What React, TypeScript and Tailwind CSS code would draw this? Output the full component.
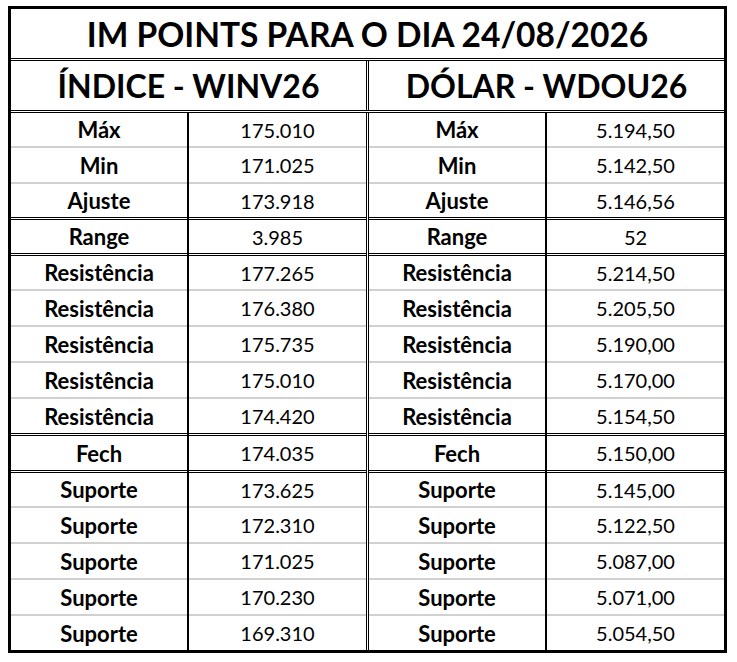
const left = {
  title: "ÍNDICE - WINV26",
  rows: [
    ["Máx", "175.010"],
    ["Min", "171.025"],
    ["Ajuste", "173.918"],
    ["Range", "3.985"],
    ["Resistência", "177.265"],
    ["Resistência", "176.380"],
    ["Resistência", "175.735"],
    ["Resistência", "175.010"],
    ["Resistência", "174.420"],
    ["Fech", "174.035"],
    ["Suporte", "173.625"],
    ["Suporte", "172.310"],
    ["Suporte", "171.025"],
    ["Suporte", "170.230"],
    ["Suporte", "169.310"],
  ],
};

const right = {
  title: "DÓLAR - WDOU26",
  rows: [
    ["Máx", "5.194,50"],
    ["Min", "5.142,50"],
    ["Ajuste", "5.146,56"],
    ["Range", "52"],
    ["Resistência", "5.214,50"],
    ["Resistência", "5.205,50"],
    ["Resistência", "5.190,00"],
    ["Resistência", "5.170,00"],
    ["Resistência", "5.154,50"],
    ["Fech", "5.150,00"],
    ["Suporte", "5.145,00"],
    ["Suporte", "5.122,50"],
    ["Suporte", "5.087,00"],
    ["Suporte", "5.071,00"],
    ["Suporte", "5.054,50"],
  ],
};

// row height + what separates it from the next one
const rowStyle = [
  "h-[33px] border-b-2 border-[#d0d0d0]",
  "h-[34px] border-b-2 border-[#d0d0d0]",
  "h-[33px] border-b-[3px] border-double border-black",
  "h-[33px] border-b-[3px] border-double border-black",
  "h-[33px] border-b-2 border-[#d0d0d0]",
  "h-[34px] border-b-2 border-[#d0d0d0]",
  "h-[34px] border-b-2 border-[#d0d0d0]",
  "h-[34px] border-b-2 border-[#d0d0d0]",
  "h-[34px] border-b-[3px] border-double border-black",
  "h-[34px] border-b-[3px] border-double border-black",
  "h-[33px] border-b-2 border-[#d0d0d0]",
  "h-[34px] border-b-2 border-[#d0d0d0]",
  "h-[34px] border-b-2 border-[#d0d0d0]",
  "h-[34px] border-b-2 border-[#d0d0d0]",
  "h-[34px]",
];

const Column = ({ items, bold }: { items: string[]; bold?: boolean }) => (
  <div className="flex flex-col">
    {items.map((text, i) => (
      <div
        key={i}
        className={`box-content flex items-center justify-center ${rowStyle[i]} ${
          bold ? "font-bold text-[22px]" : "text-[20px]"
        }`}
      >
        {text}
      </div>
    ))}
  </div>
);

const Half = ({ data }: { data: typeof left }) => (
  <div className="flex">
    <div className="w-[176px]">
      <Column items={data.rows.map((r) => r[0])} bold />
    </div>
    <div className="w-[2px] bg-black" />
    <div className="w-[177px]">
      <Column items={data.rows.map((r) => r[1])} />
    </div>
  </div>
);

const DoubleLine = () => <div className="w-[3px] border-x border-black bg-white" />;

export default function App() {
  return (
    <div className="min-h-screen bg-white pl-[8px] pt-[6px] text-black" style={{ fontFamily: "Lato, sans-serif" }}>
      <div className="w-[719px] border-[3px] border-black">
        <div className="flex h-[52px] items-center justify-center border-b-[3px] border-double border-black pt-[1px] text-[33.5px] font-bold">
          IM POINTS PARA O DIA 24/08/2026
        </div>
        <div className="flex h-[52px] border-b-[3px] border-double border-black">
          <div className="flex w-[355px] items-center justify-center text-[32px] font-bold">{left.title}</div>
          <DoubleLine />
          <div className="flex w-[355px] items-center justify-center text-[32px] font-bold">{right.title}</div>
        </div>
        <div className="flex">
          <Half data={left} />
          <DoubleLine />
          <Half data={right} />
        </div>
      </div>
    </div>
  );
}
